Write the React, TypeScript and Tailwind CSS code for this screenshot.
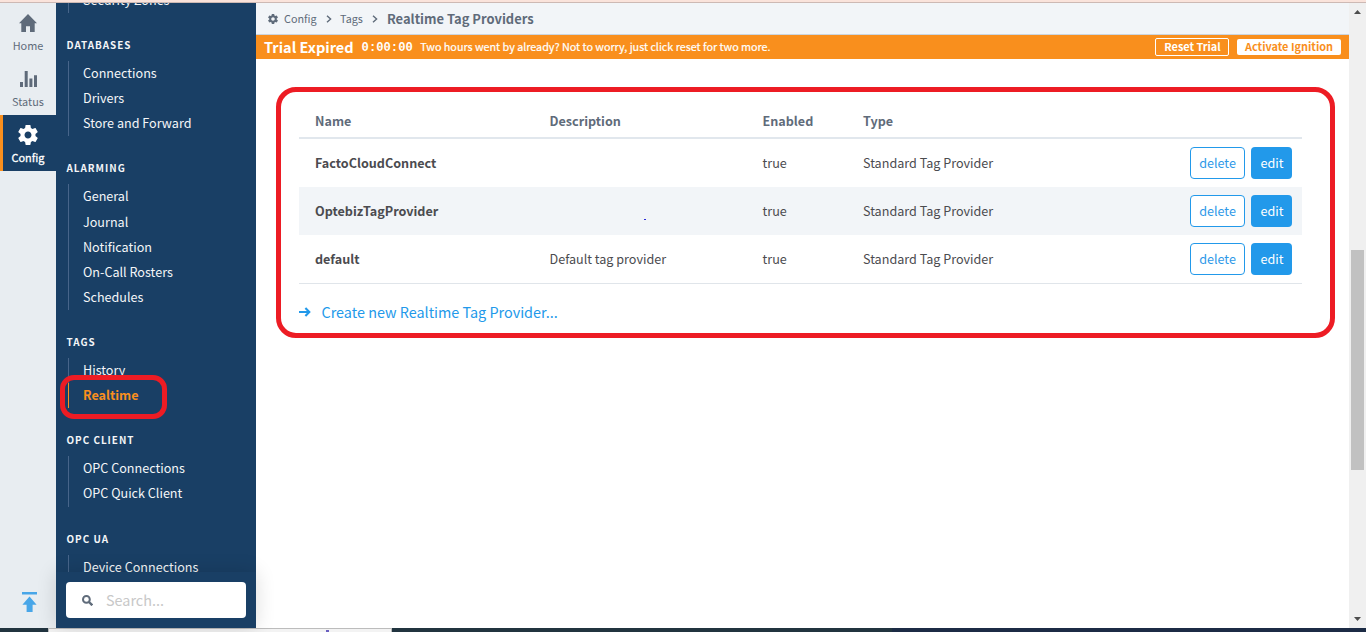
import React from "react";

type Group = { title: string; items: string[]; tight?: boolean };

const groups: Group[] = [
  { title: "DATABASES", items: ["Connections", "Drivers", "Store and Forward"] },
  { title: "ALARMING", items: ["General", "Journal", "Notification", "On-Call Rosters", "Schedules"] },
  { title: "TAGS", items: ["History", "Realtime"], tight: true },
  { title: "OPC CLIENT", items: ["OPC Connections", "OPC Quick Client"], tight: true },
  { title: "OPC UA", items: ["Device Connections"] },
];

const rows = [
  { name: "FactoCloudConnect", description: "", enabled: "true", type: "Standard Tag Provider" },
  { name: "OptebizTagProvider", description: "", enabled: "true", type: "Standard Tag Provider" },
  { name: "default", description: "Default tag provider", enabled: "true", type: "Standard Tag Provider" },
];

function Gear({ className }: { className: string }) {
  return (
    <svg viewBox="0 0 24 24" className={className} fill="currentColor">
      <path d="M19.43 12.98c.04-.32.07-.64.07-.98s-.03-.66-.07-.98l2.11-1.65c.19-.15.24-.42.12-.64l-2-3.46c-.12-.22-.39-.3-.61-.22l-2.49 1c-.52-.4-1.08-.73-1.69-.98l-.38-2.65C14.46 2.18 14.25 2 14 2h-4c-.25 0-.46.18-.49.42l-.38 2.65c-.61.25-1.17.59-1.69.98l-2.49-1c-.23-.09-.49 0-.61.22l-2 3.46c-.13.22-.07.49.12.64l2.11 1.65c-.04.32-.07.65-.07.98s.03.66.07.98l-2.11 1.65c-.19.15-.24.42-.12.64l2 3.46c.12.22.39.3.61.22l2.49-1c.52.4 1.08.73 1.69.98l.38 2.65c.03.24.24.42.49.42h4c.25 0 .46-.18.49-.42l.38-2.65c.61-.25 1.17-.59 1.69-.98l2.49 1c.23.09.49 0 .61-.22l2-3.46c.12-.22.07-.49-.12-.64l-2.11-1.65zM12 15.5c-1.93 0-3.5-1.57-3.5-3.5s1.57-3.5 3.5-3.5 3.5 1.57 3.5 3.5-1.57 3.5-3.5 3.5z" />
    </svg>
  );
}

function Chevron() {
  return (
    <svg viewBox="0 0 6 8" className="h-2 w-1.5" fill="none" stroke="#5f6b7a" strokeWidth="1.4">
      <path d="M1 0.7 L4.6 4 L1 7.3" />
    </svg>
  );
}

function Rail() {
  return (
    <nav className="relative flex w-14 shrink-0 flex-col bg-[#e8edf1] text-[10.9px] text-[#5f6b7a]">
      <div className="flex h-14 flex-col items-center pt-[11px]">
        <svg viewBox="0 0 18 18" className="h-[18px] w-[18px]" fill="#5f6b7a">
          <path d="M9 0 L18 9.3 H15.7 V18 H11 V12.3 H7 V18 H2.3 V9.3 H0 Z" />
        </svg>
        <span className="mt-[5px] leading-4">Home</span>
      </div>
      <div className="flex h-14 flex-col items-center pt-[12px]">
        <svg viewBox="0 0 17 16" className="h-4 w-[17px]" fill="#5f6b7a">
          <path d="M0 11h3v5H0zM4.7 0h3v16h-3zM9.4 7.6h3V16h-3zM14 4.2h3V16h-3z" />
        </svg>
        <span className="mt-[6px] leading-4">Status</span>
      </div>
      <div className="flex h-14 flex-col items-center border-l-[3px] border-[#f98f1d] bg-[#193f65] pt-[8px] pr-[3px] text-white">
        <Gear className="h-6 w-6" />
        <span className="mt-[2px] leading-4 [-webkit-text-stroke:0.3px]">Config</span>
      </div>
      <div className="flex flex-1 items-end pb-4 pl-[21.5px]">
        <svg viewBox="0 0 15 20" className="h-5 w-[15px]" fill="#48a6e8">
          <path d="M0 0h15v2.5H0zM7.5 4.6 L14.6 12.8 H10.6 V20 H4.6 V12.8 H0.4 Z" />
        </svg>
      </div>
    </nav>
  );
}

function Item({ label }: { label: string }) {
  const active = label === "Realtime";
  return (
    <li
      className={
        active
          ? "flex h-[25.2px] items-center border-l border-[#f98f1d] pl-3.5 font-bold text-[#f98f1d]"
          : "flex h-[25.2px] items-center border-l border-[#47658a] pl-3.5"
      }
    >
      {label}
    </li>
  );
}

function Sidebar() {
  return (
    <aside className="relative flex w-[200px] shrink-0 flex-col bg-[#193f65] text-[12.6px] text-[#f4f6f8]">
      <div className="min-h-0 flex-1 overflow-hidden">
        <ul className="-mt-[15.5px] ml-3">
          <Item label="Security Zones" />
        </ul>
        {groups.map((g) => (
          <section key={g.title}>
            <h2
              className={
                (g.tight ? "h-[47.8px]" : "h-12") +
                " flex items-center pt-[17px] pl-[10.5px] text-[9.9px] font-bold tracking-[1px]"
              }
            >
              {g.title}
            </h2>
            <ul className="ml-3">
              {g.items.map((i) => (
                <Item key={i} label={i} />
              ))}
            </ul>
          </section>
        ))}
      </div>
      <div className="h-14 bg-[#193f65] px-2.5 pt-2.5 shadow-[0_0_20px_rgba(0,0,0,0.14)]">
        <div className="flex h-9 items-center rounded bg-white pl-4 text-[14.4px] text-[#c8c8c8]">
          <svg viewBox="0 0 11 11" className="mr-[13px] h-[11px] w-[11px]" fill="none" stroke="#5f6b7a">
            <circle cx="4.4" cy="4.4" r="3.4" strokeWidth="2" />
            <path d="M7 7 L10.3 10.3" strokeWidth="2.4" />
          </svg>
          Search...
        </div>
      </div>
    </aside>
  );
}

const cols = "grid grid-cols-[234.5px_213px_100.5px_1fr_auto] items-center pl-4";

function ProviderTable() {
  return (
    <div className="ml-[43px] w-[1003px] pt-[47px] text-[12.6px] text-[#4b4b4f]">
      <div className={cols + " h-[33px] border-b-2 border-[#e1e7ed] pb-[1px] font-bold text-[#5f6b7a]"}>
        <span>Name</span>
        <span>Description</span>
        <span>Enabled</span>
        <span>Type</span>
      </div>
      <div className="border-b border-[#e0e5ea]">
        {rows.map((r) => (
          <div key={r.name} className={cols + " h-12 pr-2.5 even:bg-[#f2f5f8]"}>
            <span className="font-bold">{r.name}</span>
            <span>{r.description}</span>
            <span>{r.enabled}</span>
            <span>{r.type}</span>
            <span className="flex gap-1.5">
              <button className="h-8 w-[55px] rounded border border-[#2299ea] bg-white text-[#2f99e8]">delete</button>
              <button className="h-8 w-[41px] rounded bg-[#2299ea] pl-px text-white">edit</button>
            </span>
          </div>
        ))}
      </div>
      <div className="flex items-center pt-[17px] text-[14.4px] leading-[22px] text-[#2299ea]">
        <svg viewBox="0 0 12 10" className="mr-[10.5px] h-[10px] w-3" fill="none" stroke="currentColor" strokeWidth="2.1">
          <path d="M0 5 H10.4 M6.4 1.1 L10.3 5 L6.4 8.9" />
        </svg>
        Create new Realtime Tag Provider...
      </div>
    </div>
  );
}

function Main() {
  return (
    <main className="flex min-w-0 flex-1 flex-col bg-white">
      <div className="flex h-8 items-center border-b border-[#cbd5df] bg-[#f2f5f8] pl-[11px] text-[10.8px] text-[#5f6b7a]">
        <Gear className="mr-[5px] h-3 w-3" />
        <span className="mr-[9px]">Config</span>
        <Chevron />
        <span className="mr-[9px] ml-[8.5px]">Tags</span>
        <Chevron />
        <span className="mt-px ml-[9px] text-[12.95px] font-bold">Realtime Tag Providers</span>
      </div>
      <div className="flex h-6 items-center bg-[#f98f1d] pr-2 pl-2 text-[10.8px] text-white">
        <span className="text-[14.5px] font-bold">Trial Expired</span>
        <span className="mt-[3px] ml-2 font-['Liberation_Mono',monospace] text-[12.2px] font-bold">0:00:00</span>
        <span className="-mt-px ml-[7.5px] flex-1 tracking-[-0.02px] [-webkit-text-stroke:0.2px]">
          Two hours went by already? Not to worry, just click reset for two more.
        </span>
        <button className="mr-2 flex h-[18px] w-[74px] items-center justify-center rounded-[2px] border border-white pb-[2px] pl-px text-[10.9px] leading-[14px] font-bold">
          Reset Trial
        </button>
        <button className="flex h-4 w-[104px] items-center justify-center rounded-[2px] bg-white pb-[2px] text-[10.9px] leading-[14px] font-bold text-[#f98f1d]">
          Activate Ignition
        </button>
      </div>
      <ProviderTable />
    </main>
  );
}

function Scrollbar() {
  return (
    <div className="flex w-[17px] shrink-0 flex-col items-center bg-[#f0f0f0]">
      <svg viewBox="0 0 7 4" className="mt-[7px] h-1 w-[7px]" fill="#4d4d4d">
        <path d="M0 4 L3.5 0 L7 4Z" />
      </svg>
      <div className="mt-[236px] ml-[-1px] h-[220px] w-[13px] bg-[#c1c1c1]" />
      <svg viewBox="0 0 7 4" className="mt-auto mb-[7px] h-1 w-[7px]" fill="#4d4d4d">
        <path d="M0 0 L3.5 4 L7 0Z" />
      </svg>
    </div>
  );
}

export default function App() {
  return (
    <div className="relative flex h-[632px] w-[1366px] flex-col overflow-hidden font-['Noto_Sans_CJK_SC',sans-serif]">
      <div className="h-[3px] shrink-0 border-b border-[#cdb9b4] bg-[#fae3db]" />
      <div className="flex min-h-0 flex-1">
        <Rail />
        <Sidebar />
        <Main />
        <Scrollbar />
      </div>
      <div className="flex h-1 shrink-0 bg-[#1c2b45]">
        <div className="w-12 bg-[#21343f]" />
        <div className="w-[344px] border border-b-0 border-[#bcbcbc] bg-[#f3f3f3]" />
        <div className="w-[500px] bg-[#21343f]" />
      </div>
      <div className="absolute top-[87px] left-[276px] h-[251px] w-[1059px] rounded-[20px] border-[5px] border-[#ed1c24]" />
      <div className="absolute top-[375px] left-[60px] h-[44px] w-[107px] rounded-[14px] border-[5px] border-[#ed1c24]" />
      <div className="absolute top-[219px] left-[644px] h-px w-[2px] bg-[#2a2ad8]" />
      <div className="absolute top-[630px] left-[326px] h-[2px] w-[3px] bg-[#6a5fc0]" />
    </div>
  );
}
